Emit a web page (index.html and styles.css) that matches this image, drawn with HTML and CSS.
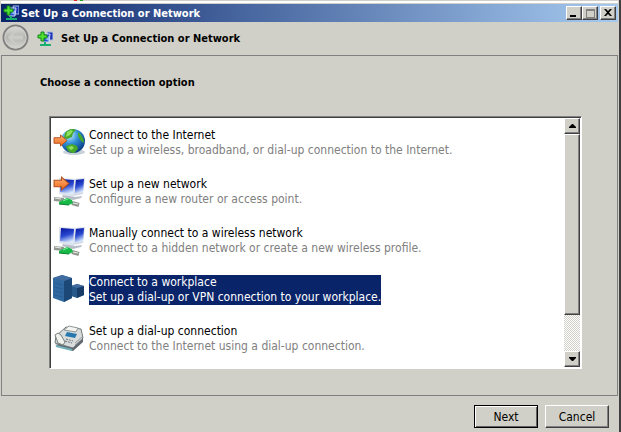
FILE: index.html
```html
<!DOCTYPE html>
<html lang="en">
<head>
  <meta charset="UTF-8" />
  <meta name="viewport" content="width=device-width, initial-scale=1.0"/>
  <title>Set Up a Connection or Network</title>
  <link rel="stylesheet" href="styles.css">
</head>
<body>
  <!-- Shared icons -->
  <svg class="defs" width="0" height="0" aria-hidden="true">
    <defs>
      <linearGradient id="screenFill" x1="0.2" y1="0" x2="0.5" y2="1">
        <stop offset="0" stop-color="#0a18a0"/>
        <stop offset="0.5" stop-color="#2848d0"/>
        <stop offset="1" stop-color="#dcecff"/>
      </linearGradient>
      <radialGradient id="globeFill" cx="0.35" cy="0.25" r="0.8">
        <stop offset="0" stop-color="#c8f0ff"/>
        <stop offset="0.45" stop-color="#3090d8"/>
        <stop offset="1" stop-color="#083880"/>
      </radialGradient>
      <linearGradient id="arrowFill" x1="0" y1="0" x2="0" y2="1">
        <stop offset="0" stop-color="#ffb070"/>
        <stop offset="1" stop-color="#f06818"/>
      </linearGradient>
      <symbol id="arrow" viewBox="0 0 16 14">
        <path d="M1 4h7V1l7 6-7 6v-3H1z" fill="url(#arrowFill)" stroke="#b05020"/>
      </symbol>
      <symbol id="network" viewBox="0 0 32 32">
        <path d="M20 3l12-1-2 16-9 2z" fill="#d4dcea"/>
        <path d="M22 4l9-1-1 13-8 1z" fill="url(#screenFill)"/>
        <path d="M6 2l17 1-2 18-15-3z" fill="#dce2ee"/>
        <path d="M8 3l13 1-1 14-13-2z" fill="url(#screenFill)"/>
        <path d="M10 19l12 2 7-1-1 2-8 2-11-3z" fill="#b8bec8"/>
        <path d="M1 23l10 1M19 27l7 2" stroke="#909890" stroke-width="4"/>
        <path d="M2 22l6 1M20 27l5 1" stroke="#e8ece8" stroke-width="1"/>
        <path d="M6 26l8-4 5 2 1 3-4 2-10-1z" fill="#18b848"/>
        <path d="M6 28l10 1" stroke="#088030"/>
        <path d="M10 25l5-2" stroke="#70f090"/>
      </symbol>
      <symbol id="addNetwork" viewBox="0 0 16 16">
        <path d="M10 1h6v8h-4z" fill="#2038b8" stroke="#a8bce0"/>
        <path d="M5 3h8l-1 8H6z" fill="#2850d0" stroke="#d0dcf0"/>
        <path d="M8 8l4-3v5z" fill="#90b8ff"/>
        <path d="M8 11v3M3 14h11" stroke="#18b070" stroke-width="2"/>
        <path d="M4 1h3v3h3v3H7v3H4V7H1V4h3z" fill="#50e030" stroke="#108818"/>
      </symbol>
    </defs>
  </svg>

  <div class="window">
    <div class="top-edge"><i class="red"></i><i class="green"></i></div>

    <div class="title-bar">
      <svg class="title-icon"><use href="#addNetwork"/></svg>
      <span class="title">Set Up a Connection or Network</span>
      <button class="caption-btn" aria-label="Minimize"><svg viewBox="0 0 10 8"><path d="M1 6h6v2H1z"/></svg></button>
      <button class="caption-btn" aria-label="Maximize" disabled><svg viewBox="0 0 10 8"><path d="M1 0h9v9H1zM2 2v6h7V2z" fill="#808080" fill-rule="evenodd"/></svg></button>
      <button class="caption-btn close" aria-label="Close"><svg viewBox="0 0 10 8"><path d="M1 0h2l2 2 2-2h2L6 3.500 9 7H7L5 5 3 7H1l3-3.500z"/></svg></button>
    </div>

    <div class="header">
      <button class="back" aria-label="Back" disabled>
        <svg viewBox="0 0 28 28">
          <defs>
            <linearGradient id="backFill" x1="0" y1="0" x2="0" y2="1">
              <stop offset="0" stop-color="#dcdcd8"/>
              <stop offset="0.5" stop-color="#b4b4b0"/>
              <stop offset="1" stop-color="#d8d8d4"/>
            </linearGradient>
          </defs>
          <circle cx="14" cy="14" r="12.500" fill="url(#backFill)" stroke="#808080" stroke-width="2"/>
          <circle cx="14" cy="14" r="11" fill="none" stroke="#d0d0cc"/>
          <path d="M6 14l7-7h3l-5 5h11v4H11l5 5h-3z" fill="#cacac6"/>
        </svg>
      </button>
      <svg class="header-icon"><use href="#addNetwork"/></svg>
      <h1>Set Up a Connection or Network</h1>
    </div>

    <div class="content">
      <h2>Choose a connection option</h2>
      <div class="list-box">
        <ul class="options">
          <li>
            <button class="option">
              <svg class="option-icon" viewBox="0 0 32 32">
                <ellipse cx="21" cy="25" rx="11" ry="3" fill="#c8d0d8"/>
                <circle cx="20" cy="14" r="12" fill="url(#globeFill)"/>
                <path d="M12 6c3-4 8-5 11-3l-3 3-1 4-5 2-3-1zM25 5c4 3 6 7 6 11l-3-2-3-5zM13 19l6-2 5 2 1 3-4 4c-4 0-7-2-8-7z" fill="#48a828"/>
                <path d="M14 5l4-2 2 1-3 4-4 2zM15 20l4-1 2 2-3 2z" fill="#90e060"/>
                <use href="#arrow" x="0" y="7" width="15" height="13"/>
              </svg>
              <span class="option-text"><span class="option-title">Connect to the Internet</span><span class="option-desc">Set up a wireless, broadband, or dial-up connection to the Internet.</span></span>
            </button>
          </li>
          <li>
            <button class="option">
              <svg class="option-icon" viewBox="0 0 32 32"><use href="#network"/><use href="#arrow" x="0" y="0" width="17" height="15"/></svg>
              <span class="option-text"><span class="option-title">Set up a new network</span><span class="option-desc">Configure a new router or access point.</span></span>
            </button>
          </li>
          <li>
            <button class="option">
              <svg class="option-icon" viewBox="0 0 32 32"><use href="#network"/></svg>
              <span class="option-text"><span class="option-title">Manually connect to a wireless network</span><span class="option-desc">Connect to a hidden network or create a new wireless profile.</span></span>
            </button>
          </li>
          <li>
            <button class="option selected">
              <svg class="option-icon" viewBox="0 0 32 32">
                <path d="M18 12l6-2 7 2v9l-7 3-6-2z" fill="#285888"/>
                <path d="M24 14l7-2v9l-7 3z" fill="#183c68"/>
                <path d="M18 12l6-2 7 2-7 2z" fill="#406ca0"/>
                <path d="M0 4l9-3 10 3v20l-8 4-11-4z" fill="#3068a0"/>
                <path d="M11 7l8-3v20l-8 4z" fill="#1c4878"/>
                <path d="M0 4l9-3 10 3-8 3z" fill="#406ca0"/>
                <path d="M1 9l9 2M1 13l9 2M1 17l9 2M1 21l9 2M19 15l4 1M19 18l4 1" stroke="#285c94"/>
              </svg>
              <span class="option-text"><span class="option-title">Connect to a workplace</span><span class="option-desc">Set up a dial-up or VPN connection to your workplace.</span></span>
            </button>
          </li>
          <li>
            <button class="option">
              <svg class="option-icon" viewBox="0 0 32 32">
                <path d="M2 22l18 6 10-9v-5l-10 3z" fill="#606870"/>
                <path d="M3 13l10-9 15 2 2 9-10 10-18-5z" fill="#d8dcdc" stroke="#707878"/>
                <path d="M11 7l5-4 9 2-2 4z" fill="#f4f4f0" stroke="#909898"/>
                <path d="M14 9l10 2-2 4-10-2z" fill="#2878b0"/>
                <path d="M2 12l3-2 3 2 4 7-2 3-5-2z" fill="#f0f0ec" stroke="#788080"/>
                <path d="M13 16l7 2M12 18l7 2" stroke="#687078" stroke-dasharray="2 1"/>
                <path d="M3 23l16 4" stroke="#70b0b8" stroke-width="2"/>
                <path d="M22 20l7-6M22 22l7-6" stroke="#989ca0"/>
              </svg>
              <span class="option-text"><span class="option-title">Set up a dial-up connection</span><span class="option-desc">Connect to the Internet using a dial-up connection.</span></span>
            </button>
          </li>
        </ul>
        <div class="scrollbar">
          <button class="scroll-btn" aria-label="Scroll up"><svg viewBox="0 0 7 4"><path d="M3 0h1l3 3v1H0V3z"/></svg></button>
          <div class="thumb"></div>
          <button class="scroll-btn" aria-label="Scroll down"><svg viewBox="0 0 7 4"><path d="M0 0h7v1L4 4H3L0 1z"/></svg></button>
        </div>
      </div>
    </div>

    <div class="footer">
      <button class="btn default">Next</button>
      <button class="btn">Cancel</button>
    </div>
  </div>
</body>
</html>
```

FILE: styles.css
```css
* {
  box-sizing: border-box;
}

body {
  margin: 0;
  background-color: #d1d0c8;
  font-family: "DejaVu Sans Condensed", Tahoma, sans-serif;
  font-size: 12px;
  color: #000;
}

button {
  font: inherit;
  color: inherit;
  padding: 0;
}

svg {
  display: block;
}

.defs {
  position: absolute;
}

.window {
  display: flex;
  flex-direction: column;
  min-height: 100vh;
  padding: 0 1px;
  border-right: 2px solid #404040;
}

/* top edge */
.top-edge {
  display: flex;
  gap: 3px;
  height: 4px;
  padding-left: 73px;
  border-bottom: 1px solid #d1d0c8;
  background: linear-gradient(#d1d0c8 1px, #fff 1px);
}

.top-edge i {
  width: 3px;
  height: 1px;
}

.red {
  background: #e02020;
}

.green {
  background: #20a020;
}

.title-bar {
  display: flex;
  align-items: center;
  height: 18px;
  padding: 0 2px;
  background: linear-gradient(to right, #0a246a, #a6caf0);
}

.title-icon {
  width: 16px;
  height: 16px;
}

.title {
  flex: 1;
  margin-left: 2px;
  color: #fff;
  font-size: 11px;
  font-weight: bold;
}

.caption-btn,
.scroll-btn,
.thumb {
  background: #d1d0c8;
  border: 1px solid;
  border-color: #fff #404040 #404040 #fff;
  box-shadow: inset -1px -1px #808080;
}

.caption-btn {
  width: 16px;
  height: 14px;
  padding: 2px;
}

.caption-btn svg {
  width: 10px;
  height: 8px;
  overflow: visible;
}

.close {
  margin-left: 2px;
}

/* wizard header */
.header {
  display: flex;
  align-items: center;
  height: 33px;
}

.back {
  border: 0;
  background: none;
  margin: 0 8px 2px 1px;
}

.back svg {
  width: 27px;
  height: 27px;
}

.header-icon {
  width: 16px;
  height: 16px;
}

h1 {
  margin: 0 0 0 8px;
  font-size: 11px;
}

.content {
  flex: 1;
  display: flex;
  flex-direction: column;
  padding: 19px 35px 26px 47px;
  border: 1px solid #808080;
}

h2 {
  margin: 0 0 26px -9px;
  font-size: 11px;
  line-height: 15px;
}

.list-box {
  flex: 1;
  display: flex;
  background: #fff;
  border: 1px solid;
  border-color: #808080 #fff #fff #808080;
  box-shadow: inset 1px 1px #404040;
  padding: 1px;
}

.options {
  flex: 1;
  display: flex;
  flex-direction: column;
  gap: 17px;
  list-style: none;
  margin: 0;
  padding: 9px 0 0 2px;
}

.option {
  display: flex;
  align-items: center;
  gap: 4px;
  height: 32px;
  border: 0;
  background: none;
  text-align: left;
}

.option-icon {
  width: 32px;
  height: 32px;
}

.option-text {
  display: flex;
  flex-direction: column;
  line-height: 15px;
  white-space: nowrap;
}

.option-desc {
  color: #808080;
}

.selected .option-text {
  background: #0a246a;
}

.selected .option-title,
.selected .option-desc {
  color: #fff;
}

/* scrollbar */
.scrollbar {
  display: flex;
  flex-direction: column;
  width: 16px;
  background: repeating-conic-gradient(#fff 0 25%, #d1d0c8 0 50%) 0 0 / 2px 2px;
}

.scroll-btn {
  display: flex;
  align-items: center;
  justify-content: center;
  height: 16px;
}

.scroll-btn svg {
  width: 7px;
  height: 4px;
}

.thumb {
  height: 181px;
  margin-bottom: auto;
}

.footer {
  display: flex;
  justify-content: flex-end;
  gap: 7px;
  padding: 9px 9px 4px;
}

.btn {
  width: 64px;
  height: 23px;
  background: #d1d0c8;
  border: 1px solid;
  border-color: #fff #404040 #404040 #fff;
  box-shadow: inset -1px -1px #808080;
}

.default {
  border-color: #000;
  box-shadow: inset 1px 1px #fff, inset -1px -1px #606060;
}
```
